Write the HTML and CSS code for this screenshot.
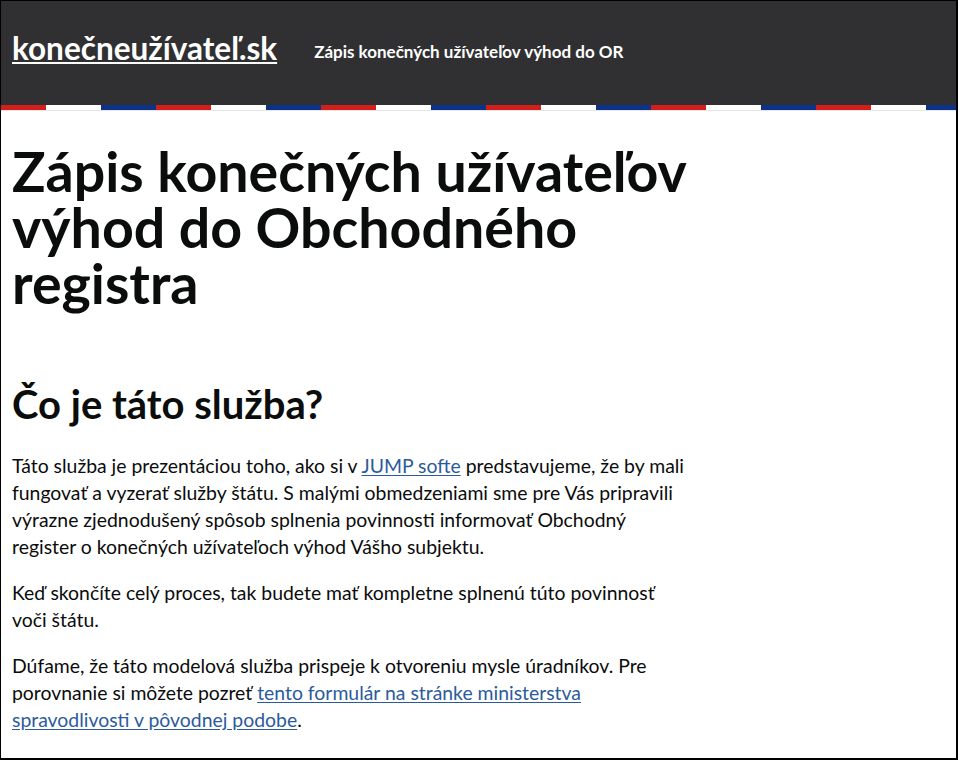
FILE: index.html
```html
<!DOCTYPE html>
<html lang="sk">
<head>
<meta charset="utf-8">
<title>Zápis konečných užívateľov výhod do OR</title>
<link rel="stylesheet" href="styles.css">
</head>
<body>
<div class="frame">
  <header class="header">
    <div class="header-inner">
      <a class="logo" href="#">konečneužívateľ.sk</a>
      <span class="service">Zápis konečných užívateľov výhod do OR</span>
    </div>
    <div class="stripe"></div>
  </header>
  <main class="main">
    <h1 class="title">Zápis konečných užívateľov výhod do Obchodného registra</h1>
    <h2 class="subtitle">Čo je táto služba?</h2>
    <p class="body">Táto služba je prezentáciou toho, ako si v <a class="link" href="#">JUMP softe</a> predstavujeme, že by mali fungovať a vyzerať služby štátu. S malými obmedzeniami sme pre Vás pripravili výrazne zjednodušený spôsob splnenia povinnosti informovať Obchodný register o konečných užívateľoch výhod Vášho subjektu.</p>
    <p class="body">Keď skončíte celý proces, tak budete mať kompletne splnenú túto povinnosť voči štátu.</p>
    <p class="body">Dúfame, že táto modelová služba prispeje k otvoreniu mysle úradníkov. Pre porovnanie si môžete pozreť <a class="link" href="#">tento formulár na stránke ministerstva spravodlivosti v pôvodnej podobe</a>.</p>
  </main>
</div>
</body>
</html>
```

FILE: styles.css
```css
html, body {
  margin: 0;
  padding: 0;
  background: #fff;
}
body {
  font-family: Lato, "Noto Sans", sans-serif;
  color: #0b0c0c;
}
.frame {
  box-sizing: border-box;
  width: 958px;
  height: 760px;
  border: 1px solid #000;
  border-right-width: 2px;
  border-bottom-width: 2px;
  overflow: hidden;
}
.header {
  background: #303032;
}
.header-inner {
  box-sizing: border-box;
  height: 104px;
  display: flex;
  align-items: baseline;
  padding: 29px 11px 0;
  gap: 37px;
}
.logo {
  color: #fff;
  font-weight: 700;
  font-size: 31.5px;
  line-height: 37px;
  text-decoration: underline;
  text-underline-offset: 2px;
  text-decoration-thickness: 2px;
}
.service {
  color: #fff;
  font-weight: 700;
  font-size: 17px;
  position: relative;
  top: -2px;
}
.stripe {
  height: 5px;
  background-color: #fff;
  background-image: linear-gradient(90deg, #fff 0 55px, #0c3388 55px 110px, #d21f1a 110px 165px);
  background-size: 165px 5px;
  background-repeat: repeat-x;
  background-position: 45px 0;
  border-bottom: 1px solid #e6e6e6;
}
.main {
  padding: 0 11px;
  width: 680px;
}
.title {
  font-size: 55.5px;
  line-height: 56px;
  font-weight: 700;
  margin: 32px 0 71px;
}
.subtitle {
  font-size: 40px;
  line-height: 45px;
  font-weight: 700;
  margin: 0 0 25px;
}
.body {
  font-size: 19.4px;
  line-height: 27px;
  margin: 0 0 19px;
}
.link {
  color: #2b5b9c;
  text-decoration: underline;
  text-underline-offset: 2px;
}
```
